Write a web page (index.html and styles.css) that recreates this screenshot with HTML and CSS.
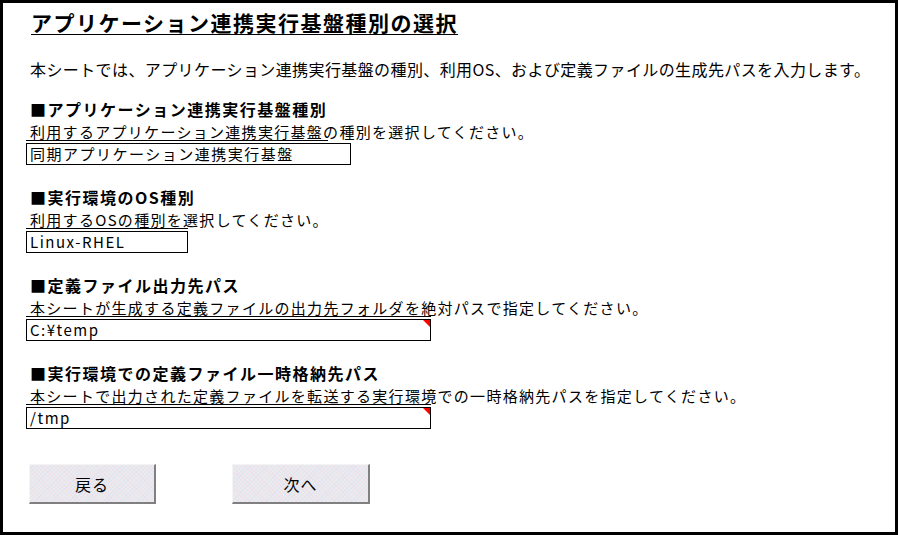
FILE: index.html
```html
<!DOCTYPE html>
<html lang="ja">
<head>
<meta charset="utf-8">
<title>アプリケーション連携実行基盤種別の選択</title>
<link rel="stylesheet" href="styles.css">
</head>
<body>
<div class="frame">
  <h1 class="title"><span>アプリケーション連携実行基盤種別の選択</span></h1>
  <p class="intro">本シートでは、アプリケーション連携実行基盤の種別、利用OS、および定義ファイルの生成先パスを入力します。</p>

  <section class="field">
    <h2 class="heading">■アプリケーション連携実行基盤種別</h2>
    <div class="desc desc-platform">利用するアプリケーション連携実行基盤の種別を選択してください。</div>
    <div class="box box-platform">同期アプリケーション連携実行基盤</div>
  </section>

  <section class="field">
    <h2 class="heading">■実行環境のOS種別</h2>
    <div class="desc desc-os">利用するOSの種別を選択してください。</div>
    <div class="box box-os">Linux-RHEL</div>
  </section>

  <section class="field">
    <h2 class="heading">■定義ファイル出力先パス</h2>
    <div class="desc desc-path">本シートが生成する定義ファイルの出力先フォルダを絶対パスで指定してください。</div>
    <div class="box box-path has-comment">C:¥temp</div>
  </section>

  <section class="field">
    <h2 class="heading">■実行環境での定義ファイル一時格納先パス</h2>
    <div class="desc desc-path">本シートで出力された定義ファイルを転送する実行環境での一時格納先パスを指定してください。</div>
    <div class="box box-path has-comment">/tmp</div>
  </section>

  <div class="buttons">
    <button class="btn btn-back" type="button">戻る</button>
    <button class="btn btn-next" type="button">次へ</button>
  </div>
</div>
</body>
</html>
```

FILE: styles.css
```css
html, body {
  margin: 0;
  padding: 0;
  background: #ffffff;
}

body {
  font-family: "Noto Sans CJK JP", "Noto Sans", "Liberation Sans", sans-serif;
  color: #000000;
}

.frame {
  box-sizing: border-box;
  width: 898px;
  height: 535px;
  border: 3px solid #000000;
  padding: 7px 0 0 23px;
  background: #ffffff;
}

.title {
  margin: 0;
  font-size: 21px;
  line-height: 24px;
  font-weight: bold;
  letter-spacing: 1.5px;
  padding-left: 5px;
}

.title span {
  text-decoration: underline;
  text-decoration-thickness: 1px;
  text-underline-offset: 3px;
}

.intro {
  margin: 25px 0 0 0;
  padding-left: 4px;
  font-size: 16px;
  line-height: 20px;
  letter-spacing: 0.4px;
  white-space: nowrap;
}

.field {
  margin-top: 19px;
}

.field + .field {
  margin-top: 21px;
}

.heading {
  margin: 0;
  padding-left: 4px;
  font-size: 16px;
  line-height: 23px;
  font-weight: bold;
  letter-spacing: 1.5px;
  white-space: nowrap;
}

.desc {
  box-sizing: border-box;
  height: 22px;
  padding-left: 4px;
  font-size: 15px;
  line-height: 22px;
  letter-spacing: 1.3px;
  white-space: nowrap;
  background-image: linear-gradient(#000000, #000000);
  background-repeat: no-repeat;
  background-size: 100% 1px;
  background-position: 0 19px;
}

.desc-platform { width: 302px; }
.desc-os { width: 162px; }
.desc-path { width: 405px; }

.box {
  position: relative;
  box-sizing: border-box;
  height: 22px;
  border: 1px solid #000000;
  padding-left: 3px;
  font-size: 15px;
  line-height: 20px;
  letter-spacing: 1.5px;
  white-space: nowrap;
  background: #ffffff;
}

.box-platform { width: 325px; }
.box-os { width: 162px; }
.box-path { width: 405px; }

.has-comment::after {
  content: "";
  position: absolute;
  top: 0;
  right: 0;
  width: 0;
  height: 0;
  border-top: 7px solid #ff0000;
  border-left: 7px solid transparent;
}

.buttons {
  display: flex;
  margin-top: 35px;
  padding-left: 3px;
  gap: 76px;
}

.btn {
  box-sizing: border-box;
  height: 40px;
  margin: 0;
  padding: 0;
  font-family: "Noto Sans CJK JP", "Noto Sans", sans-serif;
  font-size: 16px;
  letter-spacing: 1px;
  color: #000000;
  background-color: #ebebee;
  background-image:
    repeating-linear-gradient(45deg, rgba(255, 200, 220, 0.25) 0 1px, transparent 1px 3px),
    repeating-linear-gradient(-45deg, rgba(190, 220, 255, 0.25) 0 1px, transparent 1px 3px);
  border-style: solid;
  border-width: 1px 2px 2px 1px;
  border-color: #f4f4f4 #808080 #808080 #f4f4f4;
  border-radius: 0;
}

.btn-back { width: 127px; }
.btn-next { width: 138px; }
```
